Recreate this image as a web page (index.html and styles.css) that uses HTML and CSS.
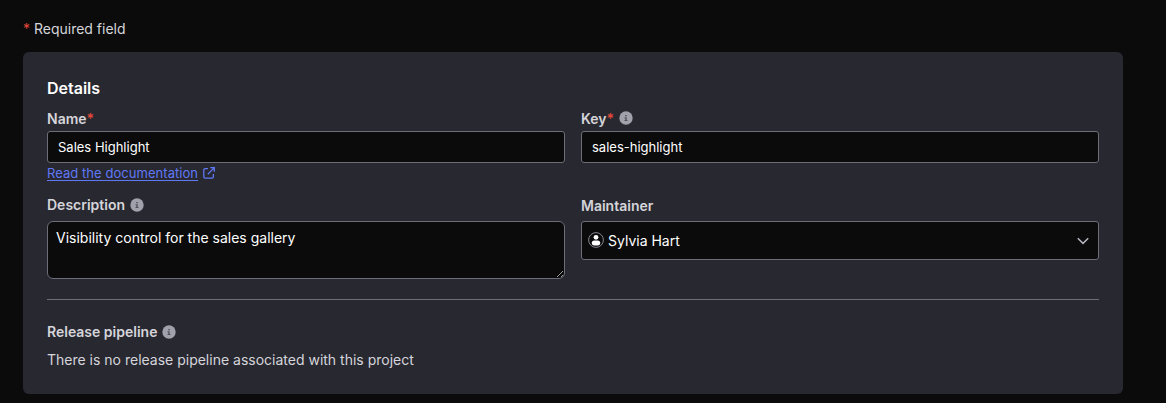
FILE: index.html
```html
<!DOCTYPE html>
<html lang="en">
<head>
<meta charset="utf-8">
<title>Project details</title>
<link rel="stylesheet" href="styles.css">
</head>
<body>
<svg class="sprite" aria-hidden="true">
  <symbol id="info" viewBox="0 0 14 14">
    <circle cx="7" cy="7" r="6.7" fill="#a0a1ab"/>
    <path d="M6.200 4h1.600v1.300H6.200zM5.500 6.300h2.200v2.700h.8v1H5.500V9h.8V7.300h-.8z" fill="#50515b"/>
  </symbol>
</svg>
<main class="page">
  <p class="required"><span class="star">*</span> Required field</p>
  <section class="panel">
    <h2 class="title">Details</h2>
    <div class="grid">
      <div class="field">
        <label class="label" for="name"><span class="label-text">Name<span class="star">*</span></span></label>
        <input class="input" id="name" type="text" value="Sales Highlight">
        <a class="link" href="#"><span class="link-text">Read the documentation</span><svg class="external" viewBox="0 0 12 12"><path d="M5 1.600H2.200Q.8 1.600.8 3v6.800q0 1.400 1.400 1.400H9q1.400 0 1.400-1.400V7M7.300.7h4v4M11.100.9L4.800 7.200"/></svg></a>
      </div>
      <div class="field">
        <label class="label" for="key"><span class="label-text">Key<span class="star">*</span></span><svg class="info info-key"><use href="#info"/></svg></label>
        <input class="input" id="key" type="text" value="sales-highlight">
      </div>
      <div class="field">
        <label class="label label-lower" for="desc"><span class="label-text">Description</span><svg class="info"><use href="#info"/></svg></label>
        <textarea class="textarea" id="desc" spellcheck="false">Visibility control for the sales gallery</textarea>
      </div>
      <div class="field">
        <span class="label label-lower label-maintainer">Maintainer</span>
        <div class="select">
          <svg class="avatar" viewBox="0 0 16 16"><circle cx="8" cy="8" r="7.400" fill="#0b0b0c" stroke="#85858f"/><circle cx="8" cy="5.300" r="2.400" fill="#fff"/><path d="M3.700 11.100Q3.700 8.600 6 8.600h4q2.300 0 2.300 2.500 0 2.300-2.300 2.300H6q-2.300 0-2.300-2.300z" fill="#fff"/></svg>
          <span class="select-value">Sylvia Hart</span>
          <svg class="chevron" viewBox="0 0 12 8"><path d="M.8 1.200L6 6.400l5.200-5.200"/></svg>
        </div>
      </div>
    </div>
    <div class="pipeline">
      <h3 class="label label-pipeline"><span class="label-text">Release pipeline</span><svg class="info info-pipeline"><use href="#info"/></svg></h3>
      <p class="note">There is no release pipeline associated with this project</p>
    </div>
  </section>
</main>
</body>
</html>
```

FILE: styles.css
```css
* { box-sizing: border-box; }
body {
  margin: 0;
  background: #0b0b0c;
  color: #d5d5da;
  font-family: Inter, "Liberation Sans", sans-serif;
  font-size: 14px;
  line-height: 20px;
  overflow: hidden;
}
.sprite { display: none; }
.page { padding: 19px 43px 9px 23px; }
.required { margin: 0 0 13px; }
.star { color: #e5483a; }
.panel {
  height: 342px;
  padding: 24px;
  border-radius: 6px;
  background: #282831;
}
.title {
  margin: 0;
  color: #fff;
  font-size: 16px;
  font-weight: 600;
  line-height: 24px;
}
.grid {
  display: grid;
  grid-template-columns: 1fr 1fr;
  grid-template-rows: 86px 87px;
  column-gap: 16px;
  padding: 6px 0 20px;
  border-bottom: 1px solid #6c6d79;
}
.field { display: flex; flex-direction: column; }
.label {
  display: flex;
  align-items: center;
  gap: 5px;
  height: 25px;
  margin: 0;
  font-size: 14px;
  font-weight: 600;
  line-height: 25px;
}
.label-lower { margin-bottom: 4px; }
.info { width: 14px; height: 14px; flex: none; }
.info-key { margin-bottom: 2px; }
.info-pipeline { margin-top: 1px; }
.input, .textarea, .select {
  flex: none;
  width: 100%;
  border: 1px solid #6c6d79;
  background: #0b0b0c;
  color: #fff;
  font-family: inherit;
}
.input {
  height: 32px;
  padding: 0 10px;
  border-radius: 3px;
  font-size: 13px;
}
.link {
  display: flex;
  align-items: center;
  gap: 5px;
  height: 20px;
  color: #6078f5;
  font-size: 13px;
  letter-spacing: 0.05px;
  line-height: 20px;
  text-decoration: none;
}
.link-text { text-decoration: underline; text-underline-offset: 2px; }
.external { width: 12px; height: 12px; }
.external path, .chevron path { fill: none; stroke: currentColor; stroke-width: 1.3; }
.chevron path { stroke-width: 1.5; }
.textarea {
  height: 58px;
  padding: 6px 8px;
  border-radius: 6px;
  font-size: 14px;
  line-height: 20px;
  resize: vertical;
}
.label-maintainer { padding-top: 2px; }
.select {
  display: flex;
  align-items: center;
  height: 39px;
  padding: 0 9px 0 6px;
  border-radius: 3px;
  font-size: 14px;
}
.avatar { width: 16px; height: 16px; margin: 0 4px 2px 0; }
.chevron { width: 12px; height: 8px; margin-left: auto; color: #b5b6bf; }
.pipeline { padding-top: 18px; }
.label-pipeline { height: 26px; }
.note { margin: 6px 0 0; }
```
